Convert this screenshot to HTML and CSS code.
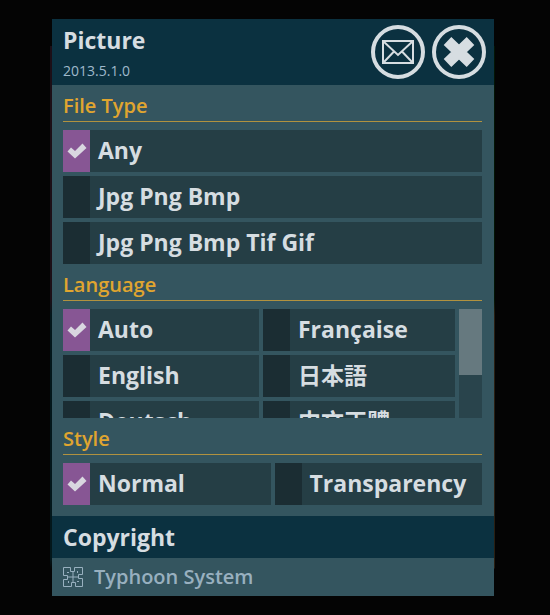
FILE: index.html
```html
<!DOCTYPE html>
<html lang="en">
<head>
<meta charset="utf-8">
<title>Picture</title>
<link rel="stylesheet" href="styles.css">
</head>
<body>
<svg class="defs" aria-hidden="true">
  <symbol id="check" viewBox="0 0 20 16"><path d="M.500 8.500 4 4.500 8 8 15.500 .500 19.500 5 8 15.500Z"/></symbol>
</svg>
<div class="frame">
<main class="panel">
  <header class="header">
    <div class="heading">
      <h1>Picture</h1>
      <p class="version">2013.5.1.0</p>
    </div>
    <div class="actions">
      <button class="round" type="button" aria-label="Mail">
        <svg viewBox="0 0 54 54"><circle cx="27" cy="27" r="25"/><path class="thin" d="M12 16h30v22H12zM12 16l15 14L42 16M12 38l11-11.500M42 38 31 26.500"/></svg>
      </button>
      <button class="round" type="button" aria-label="Close">
        <svg viewBox="0 0 54 54"><circle cx="27" cy="27" r="25"/><path class="cross" d="M15.500 16l23 22M38.500 16l-23 22"/></svg>
      </button>
    </div>
  </header>

  <form class="settings">
    <section>
      <h2>File Type</h2>
      <div class="list">
        <label class="option"><input type="radio" name="type" checked><svg><use href="#check"/></svg><span>Any</span></label>
        <label class="option"><input type="radio" name="type"><svg><use href="#check"/></svg><span>Jpg Png Bmp</span></label>
        <label class="option"><input type="radio" name="type"><svg><use href="#check"/></svg><span>Jpg Png Bmp Tif Gif</span></label>
      </div>
    </section>
    <section>
      <h2>Language</h2>
      <div class="scroller">
        <div class="list languages">
          <label class="option"><input type="radio" name="lang" checked><svg><use href="#check"/></svg><span>Auto</span></label>
          <label class="option"><input type="radio" name="lang"><svg><use href="#check"/></svg><span lang="fr">Française</span></label>
          <label class="option"><input type="radio" name="lang"><svg><use href="#check"/></svg><span>English</span></label>
          <label class="option"><input type="radio" name="lang"><svg><use href="#check"/></svg><span lang="ja">日本語</span></label>
          <label class="option"><input type="radio" name="lang"><svg><use href="#check"/></svg><span lang="de">Deutsch</span></label>
          <label class="option"><input type="radio" name="lang"><svg><use href="#check"/></svg><span lang="zh-Hant">中文正體</span></label>
        </div>
        <div class="track"><div class="thumb"></div></div>
      </div>
    </section>
    <section>
      <h2>Style</h2>
      <div class="list pair">
        <label class="option"><input type="radio" name="style" checked><svg><use href="#check"/></svg><span>Normal</span></label>
        <label class="option"><input type="radio" name="style"><svg><use href="#check"/></svg><span>Transparency</span></label>
      </div>
    </section>
  </form>

  <h3 class="copyright">Copyright</h3>
  <footer class="footer">
    <svg class="logo" viewBox="0 0 20 20" aria-hidden="true">
      <g id="arm"><path d="M10 10V4.500H7.500V.500H.500V8.500H4.500V10.500M4 5.500h2"/></g>
      <use href="#arm" transform="rotate(90 10 10)"/>
      <use href="#arm" transform="rotate(180 10 10)"/>
      <use href="#arm" transform="rotate(270 10 10)"/>
    </svg>
    <span>Typhoon System</span>
  </footer>
</main>
</div>
</body>
</html>
```
FILE: styles.css
```css
* { box-sizing: border-box; }

body {
  margin: 0;
  padding: 19px 55px 19px 50px;
  background: #040404;
  color: #d6dde1;
  font-family: "Open Sans", "Noto Sans", "Noto Sans CJK JP", sans-serif;
}

h1, h2, h3, p { margin: 0; }

.defs { display: none; }

/* Thin tinted edges on both sides of the panel */
.frame {
  padding: 0 1px 0 2px;
  background:
    linear-gradient(#040404 27px, #1c0f17 27px 280px, #03171b 296px 540px, #040404 550px) left / 50% 100% no-repeat,
    linear-gradient(#040404 27px, #031505 27px 280px, #2a1f12 296px 549px, #040404 550px) right / 50% 100% no-repeat;
}

.panel { background: #34555f; }

.header {
  display: flex;
  justify-content: space-between;
  height: 66px;
  padding: 5px 8px 0 11px;
  background: #0b3140;
}

h1, .copyright {
  font-size: 23px;
  line-height: 32px;
  font-weight: 700;
}

.version {
  margin-top: 5px;
  color: #9fb9cb;
  font-size: 14px;
  line-height: 20px;
  font-weight: 500;
}

.actions {
  display: flex;
  gap: 7px;
}

.round {
  width: 54px;
  height: 56px;
  padding: 0;
  border: 0;
  background: none;
}

.round svg {
  display: block;
  width: 54px;
  height: 54px;
  fill: none;
  stroke: #d6dde1;
  stroke-width: 4;
}

.round .thin { stroke-width: 2; }
.round .cross { stroke-width: 11; }

.settings { padding: 4px 12px 11px 11px; }

h2 {
  height: 33px;
  margin-bottom: 8px;
  border-bottom: 1px solid #b1923f;
  color: #e0a52f;
  font-size: 20px;
  line-height: 34px;
  font-weight: 600;
}

.list {
  display: grid;
  gap: 4px;
}

section + section { margin-top: 4px; }

.option {
  display: grid;
  grid-template-columns: 27px 1fr;
  align-items: center;
  height: 42px;
  background: #253e45;
  font-size: 23px;
  line-height: 38px;
  font-weight: 700;
  white-space: nowrap;
}

.option input {
  grid-area: 1 / 1;
  appearance: none;
  width: 27px;
  height: 42px;
  margin: 0;
  background: #1b2d33;
}

.option input:checked { background: #875694; }

.option svg {
  grid-area: 1 / 1;
  justify-self: center;
  z-index: 1;
  display: none;
  width: 20px;
  height: 16px;
  fill: #d9d7e0;
  pointer-events: none;
}

.option input:checked + svg { display: block; }

.option span {
  padding: 0 0 2px 8px;
}

.option [lang="zh-Hant"] { font-family: "Open Sans", "Noto Sans CJK TC", sans-serif; }

.scroller {
  display: flex;
  gap: 4px;
  height: 109px;
  overflow: hidden;
}

.languages {
  flex: 1;
  grid-template-columns: 49fr 48fr;
  align-content: start;
}

.track {
  width: 23px;
  background: #29444c;
}

.thumb {
  height: 66px;
  background: #66797f;
}

.pair { grid-template-columns: 1fr 1fr; }

.copyright {
  padding: 5px 12px 5px 11px;
  background: #0b3140;
}

.footer {
  display: flex;
  align-items: center;
  gap: 11px;
  height: 38px;
  padding: 0 12px 0 11px;
  color: #98b0bf;
  font-size: 20px;
  line-height: 36px;
  font-weight: 600;
}

.logo {
  width: 20px;
  height: 20px;
  fill: none;
  stroke: #98b0bf;
  stroke-width: 1;
}
```
